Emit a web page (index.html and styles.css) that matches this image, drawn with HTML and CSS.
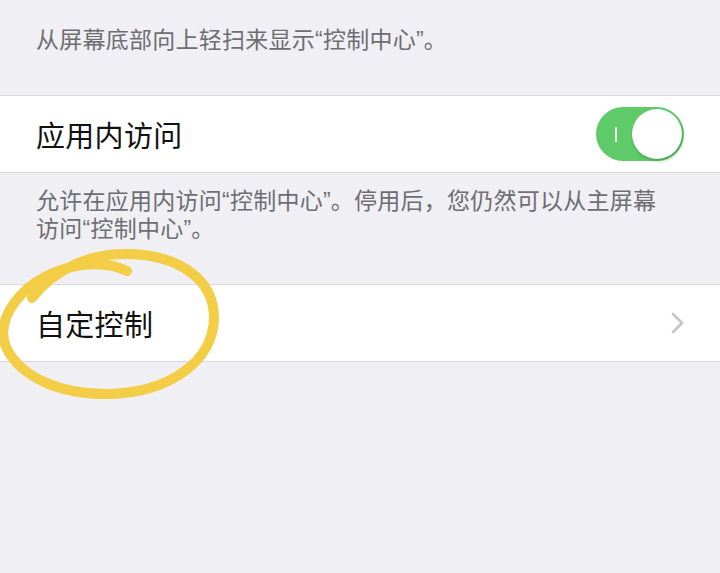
FILE: index.html
```html
<!DOCTYPE html>
<html lang="zh-CN">
<head>
  <meta charset="UTF-8">
  <title>控制中心</title>
  <link rel="stylesheet" href="styles.css">
</head>
<body>
  <div class="page">
    <p class="note note-top">从屏幕底部向上轻扫来显示“控制中心”。</p>

    <div class="group">
      <div class="cell">
        <span class="cell-title">应用内访问</span>
        <div class="switch on">
          <span class="switch-mark"></span>
          <span class="switch-knob"></span>
        </div>
      </div>
    </div>
    <p class="note note-foot">允许在应用内访问“控制中心”。停用后，您仍然可以从主屏幕访问“控制中心”。</p>

    <div class="group group-custom">
      <div class="cell">
        <span class="cell-title">自定控制</span>
        <svg class="chevron" width="13" height="22" viewBox="0 0 13 22">
          <path d="M2 2 L11 11 L2 20" fill="none" stroke="#c4c4c9" stroke-width="2.6" stroke-linecap="round" stroke-linejoin="round"/>
        </svg>
      </div>
    </div>

    <!-- 手绘的黄色圈 -->
    <svg class="scribble" width="720" height="573" viewBox="0 0 720 573">
      <path d="M32 298 C55 268 92 253 128 254 C180 255 214 280 214 318 C213 360 172 392 110 394 C60 395 20 377 6 347 C-2 327 8 306 28 288 C58 264 100 258 127 271"
            fill="none" stroke="#f2cd45" stroke-width="10" stroke-linecap="round" stroke-linejoin="round"/>
    </svg>
  </div>
</body>
</html>
```

FILE: styles.css
```css
body {
  margin: 0;
  background: #efeff4;
  font-family: "Liberation Sans", "Noto Sans CJK SC", sans-serif;
}
.page {
  position: relative;
  min-height: 573px;
  overflow: hidden;
}
.note {
  margin: 0;
  padding: 0 36px;
  font-size: 23px;
  line-height: 28px;
  letter-spacing: 0.25px;
  color: #6d6d72;
}
.note-top {
  padding-top: 26px;
  margin-bottom: 41px;
}
.note-foot {
  padding-top: 14px;
  padding-right: 50px;
  margin-bottom: 41px;
}
.group {
  background: #fff;
  border-top: 1px solid #d9d9de;
  border-bottom: 1px solid #d9d9de;
}
.cell {
  height: 76px;
  display: flex;
  align-items: center;
  justify-content: space-between;
  padding: 0 36px;
}
.cell-title {
  font-size: 29px;
  color: #111;
  letter-spacing: 0.3px;
}
.switch {
  width: 88px;
  height: 54px;
  box-sizing: border-box;
  border-radius: 27px;
  background: #dcdce0;
  display: flex;
  align-items: center;
  justify-content: space-between;
  padding: 2px 2px 2px 19px;
}
.switch.on {
  background: #5fcb68;
}
.switch-mark {
  width: 2px;
  height: 15px;
  background: #fff;
  border-radius: 1px;
  opacity: 0.9;
}
.switch-knob {
  width: 50px;
  height: 50px;
  border-radius: 50%;
  background: #fff;
  box-shadow: 1px 2px 3px rgba(40, 110, 40, 0.45);
}
.scribble {
  position: absolute;
  left: 0;
  top: 0;
  pointer-events: none;
}
```
